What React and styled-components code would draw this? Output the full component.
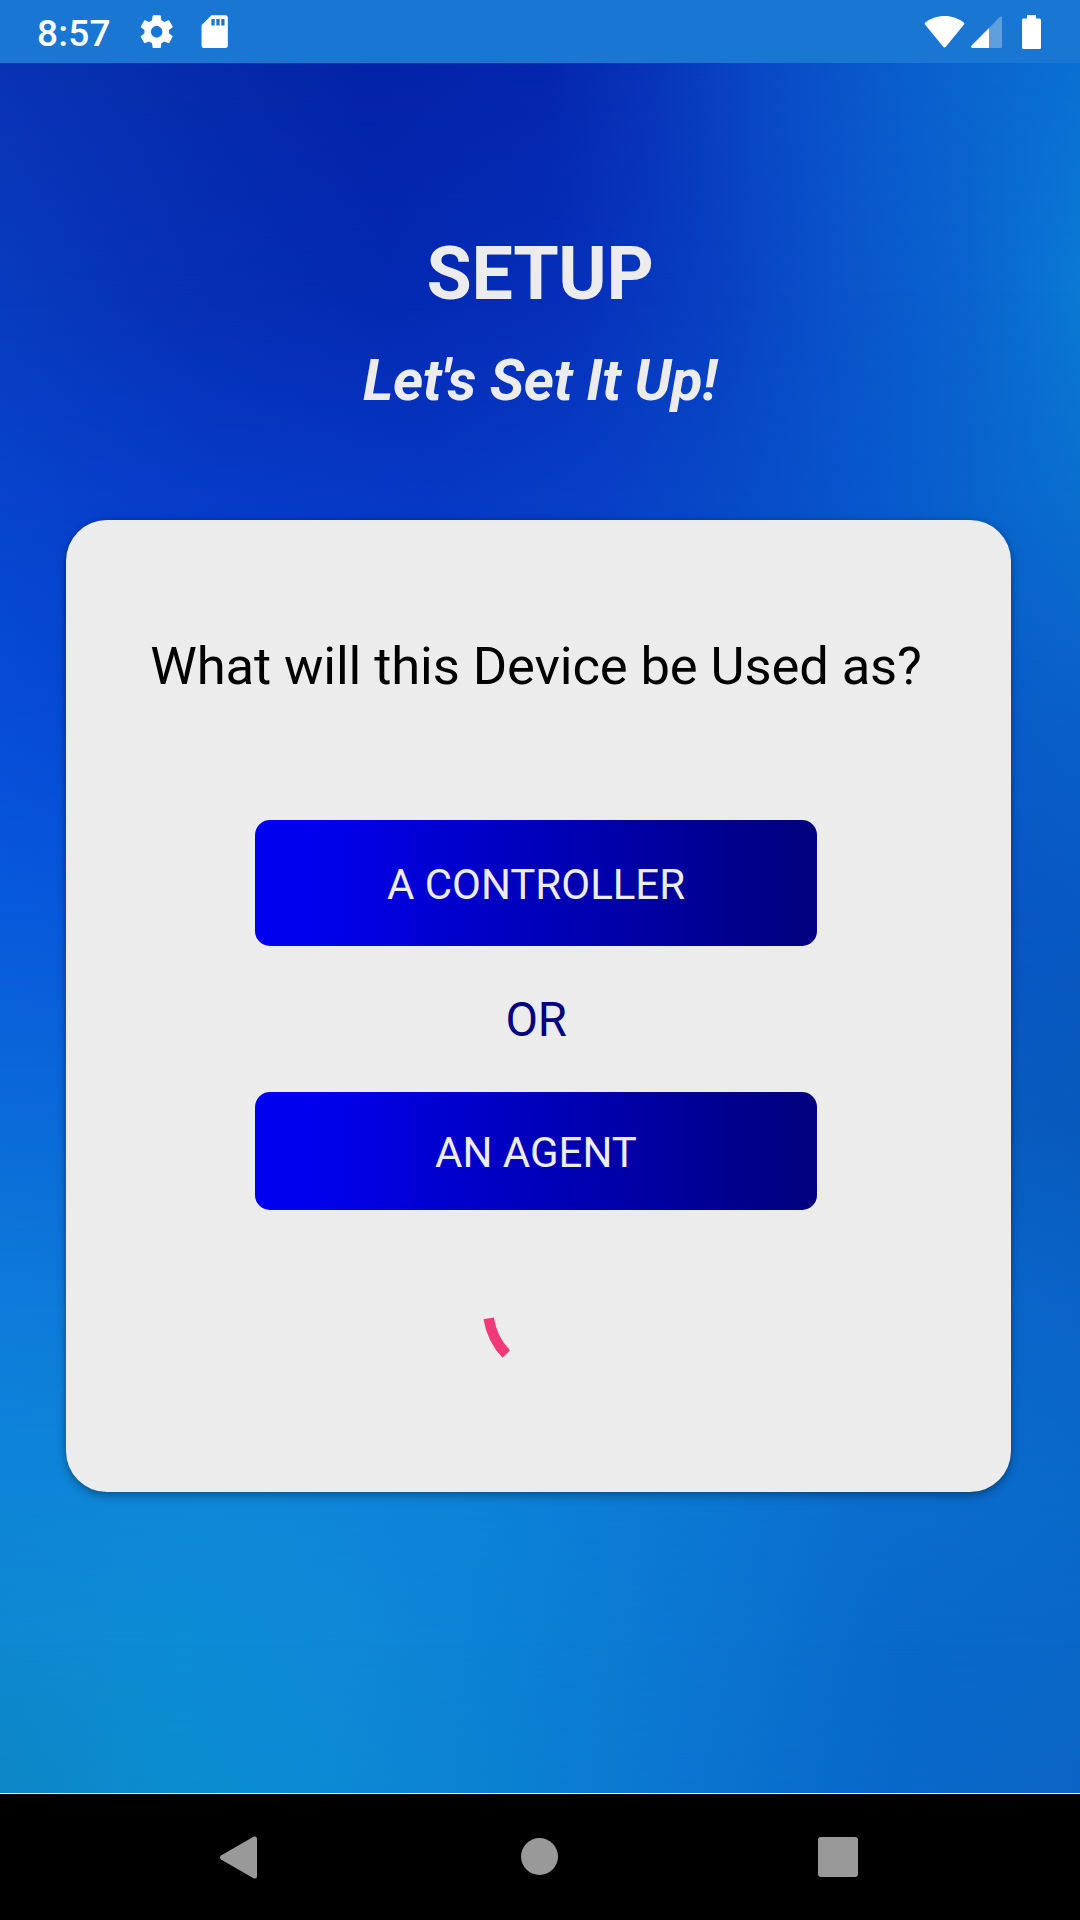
import React from "react";
import styled, { createGlobalStyle } from "styled-components";

const GlobalStyle = createGlobalStyle`
  * { box-sizing: border-box; }
  body { margin: 0; background: #000; }
`;

const Screen = styled.div`
  display: flex;
  flex-direction: column;
  width: 1080px;
  height: 1920px;
  overflow: hidden;
  font-family: Roboto, "Noto Sans", sans-serif;
`;

const StatusBar = styled.header`
  display: flex;
  align-items: center;
  height: 63px;
  padding: 0 39px 0 37px;
  background: #1976d2;
  color: #fff;
`;

const Clock = styled.span`
  width: 100px;
  padding-top: 3px;
  font-size: 37px;
  line-height: 43px;
  font-weight: 500;
  letter-spacing: 0.2px;
  white-space: nowrap;
`;

const Glyph = styled.svg`
  display: block;
  flex: none;
  width: ${(p) => p.$w}px;
  height: ${(p) => p.$h}px;
  margin-left: ${(p) => p.$gap || 0}px;
  fill: currentColor;
`;

const SystemIcons = styled.div`
  display: flex;
  align-items: center;
  margin-left: auto;
`;

const Main = styled.main`
  display: grid;
  height: 1731px;
  border-bottom: 1px solid #e6f4f8;
`;

/* Each band carries one horizontal row of the colour mesh and fades in over
   the band above it, so neighbouring rows blend vertically. */
const Band = styled.div`
  grid-area: 1 / 1;
  background: linear-gradient(to right, ${(p) => p.$stops});
  mask-image: ${(p) =>
    p.$from === null
      ? "none"
      : `linear-gradient(to bottom, transparent ${p.$from}px, #000 ${p.$to}px)`};
`;

const Content = styled.section`
  grid-area: 1 / 1;
  z-index: 1;
  display: flex;
  flex-direction: column;
  align-items: center;
  padding-top: 168px;
`;

const Title = styled.h1`
  margin: 0;
  color: #ececec;
  font-size: 73.5px;
  line-height: 86px;
  font-weight: 700;
  letter-spacing: -0.35px;
`;

const Subtitle = styled.h2`
  margin: 29px 0 0;
  color: #ececec;
  font-size: 57.75px;
  line-height: 68px;
  font-weight: 700;
  font-style: italic;
  letter-spacing: -0.38px;
`;

const Card = styled.div`
  display: flex;
  flex-direction: column;
  align-items: center;
  align-self: flex-start;
  width: 945px;
  height: 972px;
  margin: 106px 0 0 66px;
  padding: 115px 5px 0 0;
  border-radius: 41px;
  background: #ececec;
  box-shadow: 0 4px 10px rgba(0, 0, 0, 0.3), 0 0 4px rgba(0, 0, 0, 0.15);
`;

const Question = styled.p`
  margin: 0 0 123px;
  color: #000;
  font-size: 52.5px;
  line-height: 62px;
  letter-spacing: -0.1px;
  white-space: nowrap;
`;

const RoleButton = styled.button`
  display: flex;
  align-items: center;
  justify-content: center;
  width: 562px;
  height: ${(p) => p.$height}px;
  padding: 3px 0 0;
  border: 0;
  border-radius: 15px;
  background: linear-gradient(to right, #0000f0 0%, #0000ee 10%, #0000b8 52%, #000080 97%);
  color: #ececec;
  font-family: inherit;
  font-size: 42px;
  line-height: 50px;
`;

const Or = styled.span`
  margin: 46px 0 44px;
  color: #000080;
  font-size: 47.25px;
  line-height: 56px;
  letter-spacing: -0.3px;
`;

const Spinner = styled.svg`
  display: block;
  width: 126px;
  height: 126px;
  margin: 41px 0 0 4px;
`;

const NavBar = styled.nav`
  display: flex;
  align-items: center;
  justify-content: space-between;
  height: 126px;
  padding: 0 221px 0 219px;
  background: #000;
  color: #999;
`;

const mesh = [
  { y: 0, stops: "#0933b4, #062bab 18%, #0423a7 34%, #0525ae 50%, #0833ba 60%, #0948c5 70%, #0a5ccd 82%, #0a68d0 92%, #0a70d2" },
  { y: 230, stops: "#083bbf, #062fb5 18%, #0429b2 36%, #062eb9 52%, #083fc2 66%, #0a54ca 78%, #0a64d0 90%, #0a7ad4" },
  { y: 440, stops: "#0744cc, #073bc8 20%, #0638c4 40%, #083fc6 55%, #074cc8 70%, #085acd 83%, #0968cd 94%, #0a6ece" },
  { y: 640, stops: "#064cd6, #0640cc 25%, #0642cc 50%, #0854cc 75%, #0a60c8" },
  { y: 850, stops: "#085adc, #0850d4 50%, #0858c2" },
  { y: 1050, stops: "#0b6ad9, #0a64d4 50%, #0859bc" },
  { y: 1250, stops: "#0e7cda, #0c74d4 50%, #0a64c8" },
  { y: 1440, stops: "#0e86d8, #0f88d9 25%, #0d82d9 45%, #0b78d4 65%, #0b6ecf 80%, #0969c9" },
  { y: 1580, stops: "#0e88d0, #0c8cd4 17%, #0f88d8 33%, #0b7fd4 50%, #0b74d0 68%, #0869ca 83%, #0967c8" },
  { y: 1730, stops: "#0c86c6, #0c8ccf 15%, #0c8bd2 28%, #0b82d2 45%, #0b76d0 62%, #0869ca 80%, #0a64c4" },
];

function StatusIcons() {
  return (
    <SystemIcons>
      <Glyph $w={41} $h={34} viewBox="0 0 41 34">
        <path d="M20.500 1C13 1 6.200 3.400 1.300 7.500C0.500 8.200 0.500 8.900 1.200 9.800L19.200 31.700C20 32.600 21 32.600 21.800 31.700L39.800 9.800C40.500 8.900 40.500 8.200 39.700 7.500C34.800 3.400 28 1 20.500 1Z" />
      </Glyph>
      <Glyph $w={31} $h={34} $gap={6} viewBox="0 0 31 34">
        <path opacity="0.3" d="M31 3V31.500C31 32.400 30.400 33 29.500 33H18V13L28.500 2.200C29.700 1 31 1.600 31 3Z" />
        <path d="M18 13V33H1.500C0 33 -0.400 31.600 0.600 30.600Z" />
      </Glyph>
      <Glyph $w={19} $h={34} $gap={20} viewBox="0 0 19 34">
        <path d="M5 0H14V3.500H17.500Q19 3.500 19 5V32.500Q19 34 17.500 34H1.500Q0 34 0 32.500V5Q0 3.500 1.500 3.500H5Z" />
      </Glyph>
    </SystemIcons>
  );
}

export default function App() {
  return (
    <>
      <GlobalStyle />
      <Screen>
        <StatusBar>
          <Clock>8:57</Clock>
          <Glyph $w={39.4} $h={39.4} viewBox="0 0 24 24">
            <path d="M19.430 12.980c.04-.32.07-.64.07-.98s-.03-.66-.07-.98l2.110-1.650c.19-.15.24-.42.12-.64l-2-3.460c-.12-.22-.39-.3-.61-.22l-2.490 1c-.52-.4-1.080-.73-1.690-.98l-.38-2.650C14.460 2.180 14.250 2 14 2h-4c-.25 0-.46.18-.49.42l-.38 2.650c-.61.25-1.170.59-1.690.98l-2.490-1c-.23-.09-.49 0-.61.22l-2 3.460c-.13.22-.07.49.12.64l2.110 1.650c-.04.32-.07.65-.07.98s.03.66.07.98l-2.110 1.650c-.19.15-.24.42-.12.64l2 3.460c.12.22.39.3.61.22l2.490-1c.52.4 1.080.73 1.690.98l.38 2.650c.03.24.24.42.49.42h4c.25 0 .46-.18.49-.42l.38-2.650c.61-.25 1.170-.59 1.690-.98l2.490 1c.23.09.49 0 .61-.22l2-3.460c.12-.22.07-.49-.12-.64l-2.110-1.650zM12 15.500c-1.930 0-3.500-1.570-3.500-3.500s1.570-3.500 3.500-3.500 3.500 1.570 3.500 3.500-1.570 3.500-3.500 3.500z" />
          </Glyph>
          <Glyph $w={39.4} $h={39.4} $gap={18.8} viewBox="0 0 24 24">
            <path d="M18.500 2H10L4 8V20.500Q4 22 5.500 22H18.500Q20 22 20 20.500V3.500Q20 2 18.500 2ZM12 8.200H10V4.200H12ZM15 8.200H13V4.200H15ZM18 8.200H16V4.200H18Z" />
          </Glyph>
          <StatusIcons />
        </StatusBar>
        <Main>
          {mesh.map((row, i) => (
            <Band key={row.y} $stops={row.stops} $from={i ? mesh[i - 1].y : null} $to={row.y} />
          ))}
          <Content>
            <Title>SETUP</Title>
            <Subtitle>Let's Set It Up!</Subtitle>
            <Card>
              <Question>What will this Device be Used as?</Question>
              <RoleButton $height={126}>A CONTROLLER</RoleButton>
              <Or>OR</Or>
              <RoleButton $height={118}>AN AGENT</RoleButton>
              <Spinner viewBox="0 0 126 126">
                <path d="M13.650 67.400Q17.260 88.860 31.300 103.100" fill="none" stroke="#ee3a78" strokeWidth="10.500" />
              </Spinner>
            </Card>
          </Content>
        </Main>
        <NavBar>
          <Glyph $w={38} $h={43} viewBox="0 0 38 43">
            <path d="M2 19.500L34.500 0.800Q38 -0.500 38 3V40Q38 43.500 34.500 42.200L2 23.500Q0 21.500 2 19.500Z" />
          </Glyph>
          <Glyph $w={40} $h={38} $gap={2} viewBox="0 0 40 38">
            <circle cx="20.500" cy="18.500" r="18.500" />
          </Glyph>
          <Glyph $w={41} $h={40} viewBox="0 0 41 40">
            <rect x="0" width="40" height="40" rx="3" />
          </Glyph>
        </NavBar>
      </Screen>
    </>
  );
}
